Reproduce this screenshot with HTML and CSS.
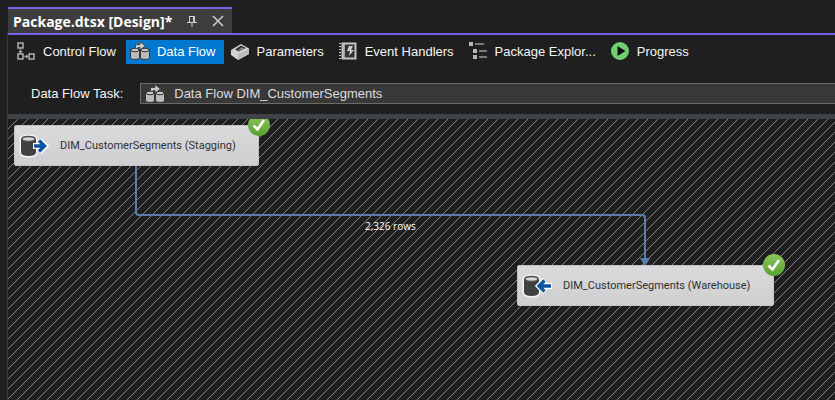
FILE: index.html
```html
<!DOCTYPE html>
<html lang="en">
<head>
<meta charset="utf-8">
<title>Package.dtsx [Design]</title>
<link rel="stylesheet" href="styles.css">
</head>
<body>
<svg class="defs" aria-hidden="true">
  <defs>
    <linearGradient id="badge-fill" x1="0" y1="0" x2="0" y2="1">
      <stop offset="0" stop-color="#8cc860"/>
      <stop offset="1" stop-color="#5aa02c"/>
    </linearGradient>
    <symbol id="data-flow" viewBox="0 0 20 20">
      <path d="M.5 8.500v8q0 2 4.500 2t4.500-2v-8zM10.500 8.500v8q0 2 4.500 2t4.500-2v-8z" fill="#bcbcbc" stroke="#333" stroke-width="1"/>
      <ellipse cx="5" cy="9" rx="4" ry="1.800" fill="#c8c8c8" stroke="#333"/>
      <ellipse cx="15" cy="9" rx="4" ry="1.800" fill="#c8c8c8" stroke="#333"/>
      <path d="M5.500 7.500V3.500h4.500V.5l5.500 4.500-5.500 4V6.500H8v1z" fill="#c8c8c8" stroke="#444" stroke-width="1"/>
    </symbol>
    <symbol id="database" viewBox="0 0 30 24">
      <path d="M2 5v13q0 4 7.500 4t7.500-4V5q0-3-7.500-3T2 5z" fill="#404040" stroke="#f4f4f4" stroke-width="3"/>
      <path d="M2 5v13q0 4 7.500 4t7.500-4V5z" fill="#404040"/>
      <ellipse cx="9.500" cy="5" rx="6.500" ry="2.500" fill="#d8d8d8" stroke="#505050" stroke-width="1.600"/>
    </symbol>
    <symbol id="success" viewBox="0 0 22 22">
      <circle cx="11" cy="11" r="11" fill="url(#badge-fill)"/>
      <path d="M5.500 11.500l4 4L16 6" fill="none" stroke="#fff" stroke-width="2.600"/>
    </symbol>
  </defs>
</svg>
<header class="document-tabs">
  <div class="document-tab">
    <span class="document-name">Package.dtsx [Design]*</span>
    <button class="tab-action pin" aria-label="Pin tab">
      <svg width="10" height="12" viewBox="0 0 10 12"><path d="M2 1.500h6M2.500 1v6M0 7.500h10M5 8v4" fill="none" stroke="#d0d0d0"/><path d="M7 1v6" stroke="#d0d0d0" stroke-width="2"/></svg>
    </button>
    <button class="tab-action" aria-label="Close tab">
      <svg width="12" height="12" viewBox="0 0 12 12"><path d="M1 1l10 10M11 1L1 11" stroke="#d0d0d0" stroke-width="1.500"/></svg>
    </button>
  </div>
</header>
<main class="designer">
  <nav class="views">
    <button class="view control-flow">
      <svg width="20" height="20" viewBox="0 0 20 20"><g fill="none" stroke="#b0b0b0" stroke-width="1.500"><path d="M2 2h5v5H2zM2 13h5v5H2zM13 13h5v5h-5z"/><path d="M4.500 8v4M8 15.500h4" stroke="#888"/></g><path d="M2.500 10h4l-2 2.500zM10 13.500v4l2.500-2z" fill="#b0b0b0"/></svg>
      Control Flow</button>
    <button class="view data-flow active" aria-pressed="true">
      <svg width="20" height="20"><use href="#data-flow"/></svg>
      Data Flow</button>
    <button class="view parameters">
      <svg width="20" height="20" viewBox="0 0 20 20"><path d="M1 9L11 3l8 4.500v5.500L8 19l-7-5z" fill="#d4d4d4"/><path d="M8 13l11-5v5L8 19z" fill="#bcbcbc"/><path d="M5 8.500l6-4 5 2.500-7 3.500z" fill="#303030"/><path d="M8.500 8.500l3.500-2 2.500 1-5 2.500z" fill="#8a8a8a"/></svg>
      Parameters</button>
    <button class="view event-handlers">
      <svg width="20" height="20" viewBox="0 0 20 20"><path d="M4.500 2.500h13v15h-13z" fill="#333" stroke="#c4c4c4" stroke-width="2"/><path d="M6 3v14" stroke="#c4c4c4" stroke-width="1.500"/><path d="M2 2v16" stroke="#c4c4c4" stroke-width="2" stroke-dasharray="1 2"/><path d="M11 5h4l-2 4h3l-5 6 1-5H9z" fill="#d0d0d0"/></svg>
      Event Handlers</button>
    <button class="view package-explorer">
      <svg width="20" height="20" viewBox="0 0 20 20"><path d="M1 1h4v4H1zM5 8h4v4H5zM5 14h4v4H5z" fill="#b8b8b8"/><path d="M7 3h9M11 10h8M11 16h8" stroke="#999" stroke-width="1.500"/></svg>
      Package Explor...</button>
    <button class="view progress">
      <svg width="20" height="20" viewBox="0 0 20 20"><circle cx="10" cy="10" r="9" fill="#70d070"/><path d="M7.500 5v10l8-5z" fill="#101010"/></svg>
      Progress</button>
  </nav>
  <div class="task-bar">
    <label for="task">Data Flow Task:</label>
    <div class="task-picker">
      <svg class="task-icon" width="20" height="20" aria-hidden="true"><use href="#data-flow"/></svg>
      <select id="task"><option>Data Flow DIM_CustomerSegments</option></select>
    </div>
  </div>
  <section class="canvas">
    <svg class="wires" aria-hidden="true">
      <defs><pattern id="hatch" width="10" height="10" patternUnits="userSpaceOnUse"><path d="M9 0h1v1h-1zM8 1h1v1h-1zM7 2h1v1h-1zM6 3h1v1h-1zM5 4h1v1h-1zM4 5h1v1h-1zM3 6h1v1h-1zM2 7h1v1h-1zM1 8h1v1h-1zM0 9h1v1h-1z" fill="#848484"/></pattern></defs>
      <rect width="100%" height="100%" fill="url(#hatch)"/>
      <path d="M128 46v47q0 3 3 3h503q3 0 3 3v42" fill="none" stroke="#5b7dae" stroke-width="2"/>
      <path d="M632 139h10l-4 7h-2z" fill="#5b7dae"/>
    </svg>
    <div class="row-count">2,326 rows</div>
    <div class="node source">
      <svg width="30" height="24" viewBox="0 0 30 24"><use href="#database"/><path d="M14 12h12M20 6l6 6-6 6" fill="none" stroke="#fff" stroke-width="6"/><path d="M15 12h11M20 6.500l5.500 5.500-5.500 5.500" fill="none" stroke="#0b55a0" stroke-width="3.400"/></svg>
      <span>DIM_CustomerSegments (Stagging)</span>
      <svg class="badge" width="22" height="22" role="img" aria-label="Succeeded"><use href="#success"/></svg>
    </div>
    <div class="node destination">
      <svg width="30" height="24" viewBox="0 0 30 24"><use href="#database"/><path d="M30 12H18M23 6l-6 6 6 6" fill="none" stroke="#fff" stroke-width="6"/><path d="M29 12H17M22.500 6.500L17 12l5.500 5.500" fill="none" stroke="#0b55a0" stroke-width="3.400"/></svg>
      <span>DIM_CustomerSegments (Warehouse)</span>
      <svg class="badge" width="22" height="22" role="img" aria-label="Succeeded"><use href="#success"/></svg>
    </div>
  </section>
</main>
</body>
</html>
```
FILE: styles.css
```css
* { box-sizing: border-box; }
body {
  margin: 0;
  min-height: 100vh;
  display: flex;
  flex-direction: column;
  overflow: hidden;
  background: #1f1f1f;
  color: #f5f5f5;
  font: 13px "Liberation Sans", Arial, sans-serif;
}
button, select { font: inherit; color: inherit; }
button { border: 0; background: none; padding: 0; }
svg { flex: none; }
.defs { position: absolute; width: 0; height: 0; }

.document-tabs {
  display: flex;
  padding: 7px 0 0 8px;
}
.document-tab {
  display: flex;
  align-items: center;
  height: 26px;
  padding: 0 8px 0 5px;
  gap: 15px;
  border-top: 2px solid #7160e8;
  background: #3d3d3d;
}
.document-name { font: bold 14px "Open Sans", sans-serif; color: #fff; }
.tab-action { display: flex; }

.designer {
  flex: 1;
  display: flex;
  flex-direction: column;
  margin-left: 7px;
  border-left: 1px solid #3a3a3a;
}
.views {
  display: flex;
  gap: 2px;
  padding: 5px 0 0 4px;
  border-top: 2px solid #7160e8;
  white-space: nowrap;
}
.view {
  display: flex;
  align-items: center;
  height: 24px;
  padding: 0 8px 2px 4px;
  gap: 7px;
}
.view.active { background: #0078d0; color: #fff; }

.task-bar {
  display: flex;
  align-items: center;
  gap: 17px;
  padding: 19px 0 10px 23px;
  overflow: hidden;
  border-bottom: 5px solid #3f4247;
}
.task-picker { position: relative; flex: 1; margin-right: -2px; }
.task-icon { position: absolute; left: 5px; top: 1px; }
.task-picker select {
  display: block;
  width: 100%;
  height: 21px;
  padding: 0 0 0 33px;
  appearance: none;
  border: 1px solid #6a6a6a;
  border-radius: 0;
  background: #383838;
  color: #dcdcdc;
}

.canvas {
  position: relative;
  flex: 1;
  overflow: hidden;
}
.wires { position: absolute; width: 100%; height: 100%; }
.row-count {
  position: absolute;
  left: 357px;
  top: 100px;
  font: 10px/14px "Open Sans", sans-serif;
  color: #fff;
}
.node {
  position: absolute;
  display: flex;
  align-items: center;
  gap: 11px;
  height: 41px;
  padding-left: 4px;
  border: 1px solid #c4c4c6;
  border-radius: 2px;
  background: linear-gradient(#dadadc, #cfcfd2);
  color: #303030;
  font: 11px Roboto, sans-serif;
}
.source { left: 6px; top: 6px; width: 245px; }
.destination { left: 509px; top: 146px; width: 257px; }
.badge { position: absolute; right: -12px; top: -12px; }
```
